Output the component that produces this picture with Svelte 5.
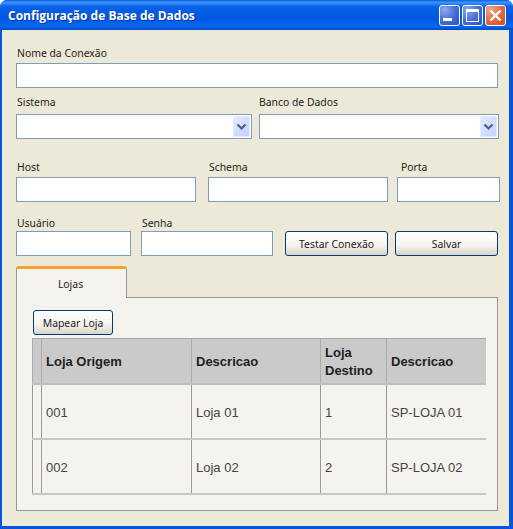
<script>
	const lojas = [
		{ origem: '001', descricao: 'Loja 01', destino: '1', descDestino: 'SP-LOJA 01' },
		{ origem: '002', descricao: 'Loja 02', destino: '2', descDestino: 'SP-LOJA 02' }
	];
</script>

<div class="window">
	<header class="titlebar">
		<span class="title">Configuração de Base de Dados</span>
		<div class="controls">
			<button class="ctl" aria-label="Minimizar">
				<svg width="21" height="21" viewBox="0 0 21 21"><rect x="4" y="13" width="9" height="3" fill="#fff" /></svg>
			</button>
			<button class="ctl" aria-label="Maximizar">
				<svg width="21" height="21" viewBox="0 0 21 21"><rect x="4.5" y="4.5" width="12" height="12" fill="none" stroke="#fff" /><rect x="4" y="4" width="13" height="3" fill="#fff" /></svg>
			</button>
			<button class="ctl close" aria-label="Fechar">
				<svg width="21" height="21" viewBox="0 0 21 21"><path d="M5.5 5.5l10 10M15.5 5.5l-10 10" stroke="#fff" stroke-width="2.4" fill="none" /></svg>
			</button>
		</div>
	</header>

	<main class="content">
		<div class="field name-field">
			<label for="nome">Nome da Conexão</label>
			<input id="nome" type="text" />
		</div>

		<div class="row row-sistema">
			<div class="field">
				<label for="sistema">Sistema</label>
				<div class="combo" id="sistema">
					<span class="arrow">
						<svg width="11" height="8" viewBox="0 0 11 8"><path d="M1.5 1.5l4 4 4-4" fill="none" stroke="#4d6185" stroke-width="2.2" /></svg>
					</span>
				</div>
			</div>
			<div class="field">
				<label for="banco">Banco de Dados</label>
				<div class="combo" id="banco">
					<span class="arrow">
						<svg width="11" height="8" viewBox="0 0 11 8"><path d="M1.5 1.5l4 4 4-4" fill="none" stroke="#4d6185" stroke-width="2.2" /></svg>
					</span>
				</div>
			</div>
		</div>

		<div class="row row-host">
			<div class="field">
				<label for="host">Host</label>
				<input id="host" type="text" />
			</div>
			<div class="field">
				<label for="schema">Schema</label>
				<input id="schema" type="text" />
			</div>
			<div class="field porta">
				<label for="porta">Porta</label>
				<input id="porta" type="text" />
			</div>
		</div>

		<div class="row row-user">
			<div class="field">
				<label for="usuario">Usuário</label>
				<input id="usuario" type="text" />
			</div>
			<div class="field">
				<label for="senha">Senha</label>
				<input id="senha" type="password" />
			</div>
			<button class="btn testar">Testar Conexão</button>
			<button class="btn salvar">Salvar</button>
		</div>

		<div class="tabs">
			<div class="tab">Lojas</div>
		</div>
		<section class="panel">
			<button class="btn mapear">Mapear Loja</button>
			<table>
				<colgroup>
					<col style="width: 9px" />
					<col style="width: 150px" />
					<col style="width: 129px" />
					<col style="width: 66px" />
					<col style="width: 99px" />
				</colgroup>
				<thead>
					<tr>
						<th></th>
						<th>Loja Origem</th>
						<th>Descricao</th>
						<th>Loja Destino</th>
						<th>Descricao</th>
					</tr>
				</thead>
				<tbody>
					{#each lojas as loja}
						<tr>
							<td></td>
							<td>{loja.origem}</td>
							<td>{loja.descricao}</td>
							<td>{loja.destino}</td>
							<td>{loja.descDestino}</td>
						</tr>
					{/each}
				</tbody>
			</table>
		</section>
	</main>
</div>

<style>
	:global(body) {
		margin: 0;
		background: #fff;
	}

	.window {
		box-sizing: border-box;
		width: 513px;
		height: 529px;
		display: flex;
		flex-direction: column;
		background: #0855dd;
		border-radius: 7px 7px 0 0;
		overflow: hidden;
		font-family: "Noto Sans", sans-serif;
		font-size: 10.4px;
		color: #222;
	}

	.titlebar {
		height: 30px;
		flex: none;
		box-sizing: border-box;
		display: flex;
		align-items: center;
		justify-content: space-between;
		padding: 0 7px 0 8px;
		background: linear-gradient(180deg, #0a5fe0 0%, #3d94fb 8%, #0a62e8 22%, #0056e0 60%, #0468f0 88%, #0349c4 100%);
	}

	.title {
		color: #fff;
		font-family: "Open Sans", sans-serif;
		font-size: 12px;
		font-weight: bold;
		text-shadow: 1px 1px 0 #0a3a9c;
	}

	.controls {
		display: flex;
		gap: 2px;
		margin-top: 1px;
	}

	.ctl {
		box-sizing: border-box;
		width: 21px;
		height: 21px;
		padding: 0;
		border: 1px solid #fff;
		border-radius: 3px;
		background: radial-gradient(circle at 25% 20%, #8fa8ee 0%, #4a6fd8 50%, #2f50c4 100%);
		display: block;
	}

	.ctl svg {
		display: block;
		margin: -1px;
	}

	.close {
		background: radial-gradient(circle at 25% 20%, #eda58a 0%, #e2673f 55%, #d24a20 100%);
	}

	.content {
		flex: 1;
		box-sizing: border-box;
		margin: 0 4px 3px 2px;
		padding: 17px 11px 15px 14px;
		background: #ece9d8;
		display: flex;
		flex-direction: column;
	}

	.field {
		display: flex;
		flex-direction: column;
		min-width: 0;
	}

	label {
		display: block;
		height: 12px;
		line-height: 12px;
		margin: 0 0 4px 1px;
		color: #222;
	}

	input {
		box-sizing: border-box;
		height: 25px;
		width: 100%;
		border: 1px solid #7f9db9;
		background: #fff;
		padding: 0 3px;
		margin: 0;
		outline: none;
	}

	.row {
		display: grid;
	}

	.row-sistema {
		margin-top: 8px;
		grid-template-columns: 236px 240px;
		column-gap: 7px;
	}

	.row-sistema label {
		margin-bottom: 6px;
	}

	.row-sistema .field:last-child label {
		margin-left: 0;
	}

	.row-host {
		margin-top: 22px;
		grid-template-columns: 180px 180px 103px;
		column-gap: 12px;
	}

	.porta {
		margin-left: -3px;
		width: 103px;
	}

	.row-host .porta label {
		margin-left: 4px;
	}

	.row-user {
		margin-top: 15px;
		grid-template-columns: 115px 132px 103px 103px;
		column-gap: 10px;
		align-items: end;
	}

	.row-user label {
		margin-bottom: 2px;
	}

	.combo {
		box-sizing: border-box;
		height: 25px;
		border: 1px solid #7f9db9;
		background: #fff;
		display: flex;
		justify-content: flex-end;
		padding: 1px;
	}

	.arrow {
		box-sizing: border-box;
		width: 17px;
		height: 21px;
		border: 1px solid #e1eafe;
		border-radius: 2px;
		background: linear-gradient(135deg, #e2eafe 0%, #c3d3fd 100%);
		display: flex;
		align-items: center;
		justify-content: center;
	}

	.btn {
		box-sizing: border-box;
		height: 25px;
		padding: 0;
		border: 1px solid #003c74;
		border-radius: 3px;
		background: linear-gradient(180deg, #ffffff 0%, #f6f5f0 55%, #d8d5c8 100%);
		font-family: "Noto Sans", sans-serif;
		font-size: 10.4px;
		color: #222;
	}

	.testar {
		margin-left: 2px;
		width: 103px;
	}

	.salvar {
		margin-left: -1px;
		width: 103px;
	}

	.tabs {
		margin-top: 10px;
		height: 31px;
		display: flex;
	}

	.tab {
		box-sizing: border-box;
		width: 111px;
		height: 32px;
		position: relative;
		z-index: 1;
		background: #f4f3ee;
		border: 1px solid #919b9c;
		border-top: 3px solid #f5a02c;
		border-bottom: none;
		border-radius: 3px 3px 0 0;
		padding-top: 9px;
		padding-right: 2px;
		line-height: 12px;
		text-align: center;
		color: #222;
	}

	.panel {
		box-sizing: border-box;
		flex: 1;
		background: #f4f3ee;
		border: 1px solid #919b9c;
		padding: 12px 11px 0 15px;
	}

	.mapear {
		display: block;
		width: 80px;
		margin-left: 1px;
	}

	table {
		margin-top: 3px;
		border-collapse: collapse;
		table-layout: fixed;
		width: 453px;
		font-family: "Liberation Sans", sans-serif;
		font-size: 13px;
		color: #444;
	}

	th {
		height: 45px;
		box-sizing: border-box;
		background: #cacaca;
		border-top: 1px solid #a8a8a8;
		border-bottom: 2px solid #c0bfb8;
		border-left: 1px solid #ababab;
		padding: 3px 4px 0;
		text-align: left;
		font-weight: bold;
		line-height: 18px;
		color: #222;
	}

	td {
		height: 55px;
		box-sizing: border-box;
		border-bottom: 2px solid #c8c7c0;
		border-left: 1px solid #9a9a96;
		padding: 3px 4px 0;
	}
</style>
